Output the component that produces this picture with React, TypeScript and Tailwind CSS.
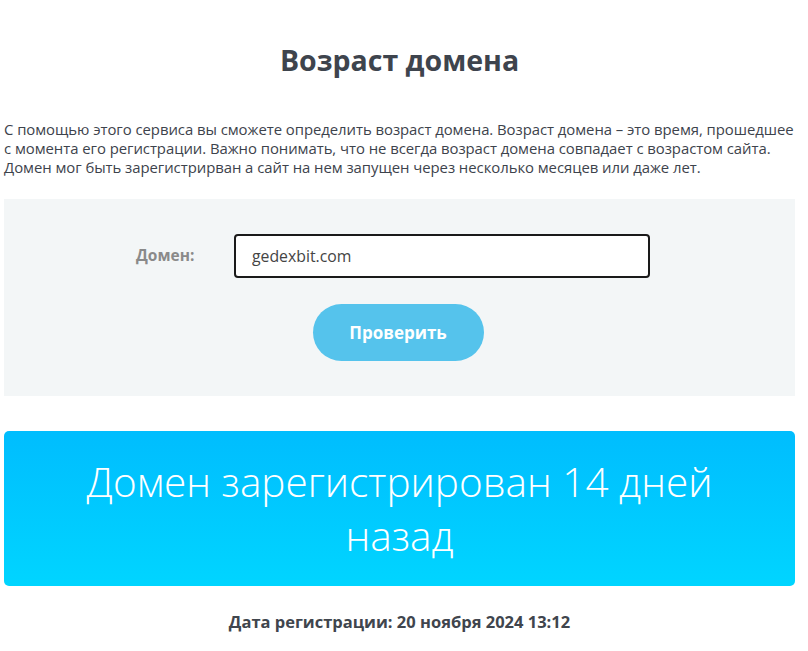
export default function App() {
  return (
    <div className="min-h-screen bg-white px-[4px] text-[#3d434c]" style={{ fontFamily: '"Open Sans", Arial, sans-serif' }}>
      <div className="w-[791px]">
        <h1 className="pt-[42px] text-center text-[28.5px] font-bold leading-[36px] text-[#3e444d]">Возраст домена</h1>

        <p className="mt-[42px] whitespace-nowrap text-[14.9px] leading-[19px] tracking-[-0.05px] text-[#3d434c]">
          С помощью этого сервиса вы сможете определить возраст домена. Возраст домена – это время, прошедшее
          <br />
          с момента его регистрации. Важно понимать, что не всегда возраст домена совпадает с возрастом сайта.
          <br />
          Домен мог быть зарегистрирван а сайт на нем запущен через несколько месяцев или даже лет.
        </p>

        <div className="mt-[22px] flex h-[197px] w-[791px] flex-col items-center bg-[#f3f6f7] pt-[35px]">
          <div className="flex items-center pr-[13px]">
            <label className="w-[98px] text-[15.5px] font-bold text-[#8a8a8a]">Домен:</label>
            <input
              defaultValue="gedexbit.com"
              className="h-[44px] w-[416px] rounded-[4px] border-2 border-[#1a1a1a] bg-white px-[16px] text-[15.8px] text-[#444] outline-none"
            />
          </div>
          <button className="mt-[26px] ml-[-3px] h-[57px] w-[171px] rounded-full bg-[#55c3ec] text-[17px] font-bold text-white">
            Проверить
          </button>
        </div>

        <div className="mt-[35px] flex h-[155px] w-[791px] items-center justify-center rounded-[5px] bg-gradient-to-b from-[#00bdfe] to-[#00d5ff] px-[60px] text-center">
          <div className="text-[40.5px] font-light leading-[54px] text-white">Домен зарегистрирован 14 дней назад</div>
        </div>

        <div className="mt-[24px] text-center text-[16.5px] font-bold text-[#40454d]">Дата регистрации: 20 ноября 2024 13:12</div>
      </div>
    </div>
  );
}
